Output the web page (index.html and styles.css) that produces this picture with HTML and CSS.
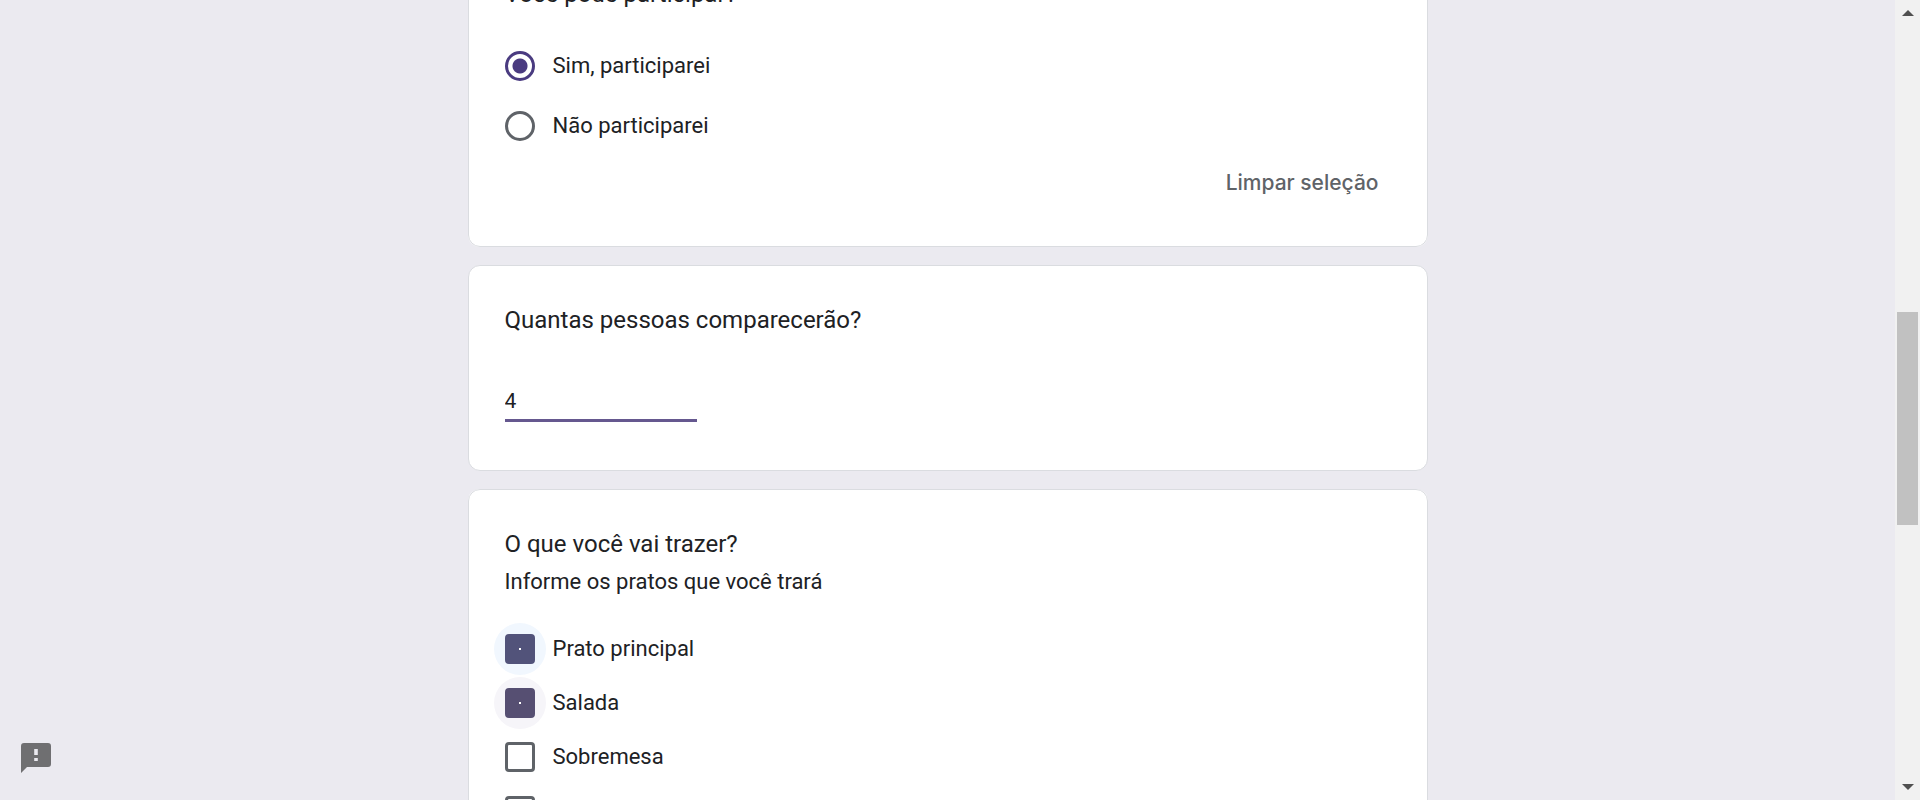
FILE: index.html
```html
<!DOCTYPE html>
<html lang="pt-BR">
<head>
<meta charset="utf-8">
<title>Formulário</title>
<link rel="stylesheet" href="styles.css">
</head>
<body>
<div class="page">
  <main class="view">
    <form class="form">
      <fieldset class="card">
        <legend class="title">Você pode participar?</legend>
        <div class="options options-radio">
          <label class="option"><input class="radio" type="radio" name="presence" checked><span>Sim, participarei</span></label>
          <label class="option"><input class="radio" type="radio" name="presence"><span>Não participarei</span></label>
        </div>
        <div class="actions"><button class="clear" type="button">Limpar seleção</button></div>
      </fieldset>
      <section class="card">
        <label class="title" for="people">Quantas pessoas comparecerão?</label>
        <input class="field" id="people" type="text" value="4">
      </section>
      <fieldset class="card">
        <legend class="title">O que você vai trazer?</legend>
        <p class="description">Informe os pratos que você trará</p>
        <div class="options options-check">
          <label class="option option-hover"><input class="check" type="checkbox" checked><span>Prato principal</span></label>
          <label class="option"><input class="check" type="checkbox" checked><span>Salada</span></label>
          <label class="option"><input class="check" type="checkbox"><span>Sobremesa</span></label>
          <label class="option"><input class="check" type="checkbox" aria-label="Outra opção"></label>
        </div>
      </fieldset>
    </form>
    <button class="report" type="button" aria-label="Denunciar problema">
      <svg viewBox="0 0 30 30" width="30" height="30"><path fill="#6f6f71" fill-rule="evenodd" d="M3 0H27a3 3 0 0 1 3 3V21a3 3 0 0 1-3 3H6L0 30V3A3 3 0 0 1 3 0ZM13.2 6v6h3.6V6ZM13.2 15v3h3.6v-3Z"/></svg>
    </button>
  </main>
  <div class="scrollbar" aria-hidden="true">
    <svg class="arrow" viewBox="0 0 12 6" width="12" height="6"><path fill="#505050" d="M6 0 12 6H0Z"/></svg>
    <div class="track"><div class="thumb"></div></div>
    <svg class="arrow" viewBox="0 0 12 6" width="12" height="6"><path fill="#505050" d="M0 0H12L6 6Z"/></svg>
  </div>
</div>
</body>
</html>
```

FILE: styles.css
```css
* { box-sizing: border-box; }
body {
  margin: 0;
  background: #ebeaf0;
  color: #202124;
  font-family: Roboto, "Liberation Sans", sans-serif;
}
.page { display: flex; height: 100vh; overflow: hidden; }
.view { flex: 1; min-width: 0; overflow: hidden; }
.form {
  display: flex;
  flex-direction: column;
  gap: 18px;
  max-width: 960px;
  margin: -61px auto 0;
}
.card {
  display: flex;
  flex-direction: column;
  min-width: 0;
  margin: 0;
  padding: 36px;
  border: 1px solid #dadce0;
  border-radius: 12px;
  background: #fff;
}
.title {
  float: left;
  padding: 0;
  font-size: 24px;
  line-height: 36px;
}
.description {
  margin: 6px 0 0;
  font-size: 22px;
  line-height: 28px;
}
.options { display: flex; flex-direction: column; }
.options-radio { margin-top: 24px; }
.options-check { margin-top: 26px; }
.option {
  display: flex;
  position: relative;
  align-items: center;
  gap: 18px;
  height: 60px;
  font-size: 22px;
  line-height: 30px;
}
.options-check .option { height: 54px; }
.radio, .check {
  flex: none;
  appearance: none;
  width: 30px;
  height: 30px;
  margin: 0;
  border: 3px solid #5f6368;
}
.radio { border-radius: 50%; }
.radio:checked {
  border-color: #4a3b80;
  background: radial-gradient(circle, #4a3b80 7px, transparent 8px);
}
.check { position: relative; border-radius: 4px; }
.check:checked {
  border-color: #564f72;
  background: linear-gradient(#fff, #fff) center / 2px 2px no-repeat #564f72;
}
.option:has(.check:checked)::before {
  content: "";
  position: absolute;
  left: -11px;
  top: 1px;
  width: 52px;
  height: 52px;
  border-radius: 50%;
  background: #f6f5f9;
}
.option-hover:has(.check:checked)::before { background: #f1f7fe; }
.option-hover .check:checked { border-color: #52537a; background-color: #52537a; }
.actions { display: flex; justify-content: flex-end; }
.clear {
  height: 54px;
  padding: 0 12px;
  border: 0;
  background: none;
  color: #5f6368;
  font: 500 21px/30px Inter, "Liberation Sans", sans-serif;
}
.field {
  width: 192px;
  height: 40px;
  margin: 44px 0 12px;
  padding: 0;
  border: 0;
  border-bottom: 3px solid #65588f;
  background: none;
  color: #202124;
  font: 21px/36px Roboto, "Liberation Sans", sans-serif;
}
.report {
  position: fixed;
  left: 21px;
  bottom: 27px;
  padding: 0;
  border: 0;
  background: none;
}
.report svg, .arrow { display: block; }
.scrollbar {
  display: flex;
  flex-direction: column;
  align-items: center;
  width: 25px;
  padding: 10px 2px;
  background: #f1f1f1;
}
.track {
  display: grid;
  flex: 1;
  width: 21px;
  padding: 9px 0;
  grid-template-rows: 287fr 213fr 250fr;
}
.thumb { grid-row: 2; background: #c1c1c1; }
```
